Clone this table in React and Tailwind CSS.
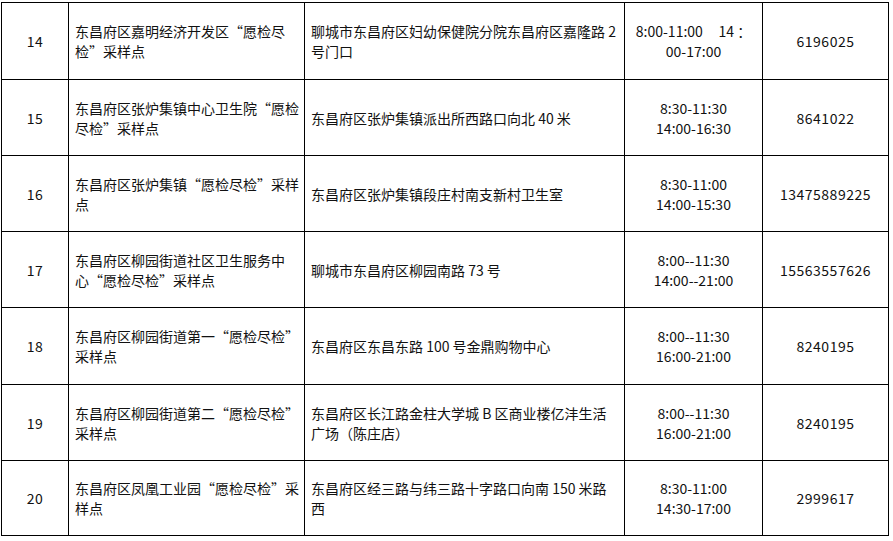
import React from "react";

const rows = [
  {
    n: "14",
    name: ["东昌府区嘉明经济开发区“愿检尽", "检”采样点"],
    addr: ["聊城市东昌府区妇幼保健院分院东昌府区嘉隆路 2", "号门口"],
    time: ["8:00-11:00     14 ：", "00-17:00"],
    tel: "6196025",
    h: "h-[77px]",
  },
  {
    n: "15",
    name: ["东昌府区张炉集镇中心卫生院“愿检", "尽检”采样点"],
    addr: ["东昌府区张炉集镇派出所西路口向北 40 米"],
    time: ["8:30-11:30", "14:00-16:30"],
    tel: "8641022",
    h: "h-[76px]",
  },
  {
    n: "16",
    name: ["东昌府区张炉集镇“愿检尽检”采样", "点"],
    addr: ["东昌府区张炉集镇段庄村南支新村卫生室"],
    time: ["8:30-11:00", "14:00-15:30"],
    tel: "13475889225",
    h: "h-[76px]",
  },
  {
    n: "17",
    name: ["东昌府区柳园街道社区卫生服务中", "心“愿检尽检”采样点"],
    addr: ["聊城市东昌府区柳园南路 73 号"],
    time: ["8:00--11:30", "14:00--21:00"],
    tel: "15563557626",
    h: "h-[76px]",
  },
  {
    n: "18",
    name: ["东昌府区柳园街道第一“愿检尽检”", "采样点"],
    addr: ["东昌府区东昌东路 100 号金鼎购物中心"],
    time: ["8:00--11:30", "16:00-21:00"],
    tel: "8240195",
    h: "h-[77px]",
  },
  {
    n: "19",
    name: ["东昌府区柳园街道第二“愿检尽检”", "采样点"],
    addr: ["东昌府区长江路金柱大学城 B 区商业楼亿沣生活", "广场（陈庄店）"],
    time: ["8:00--11:30", "16:00-21:00"],
    tel: "8240195",
    h: "h-[76px]",
  },
  {
    n: "20",
    name: ["东昌府区凤凰工业园“愿检尽检”采", "样点"],
    addr: ["东昌府区经三路与纬三路十字路口向南 150 米路", "西"],
    time: ["8:30-11:00", "14:30-17:00"],
    tel: "2999617",
    h: "h-[75px]",
  },
];

function Lines({ lines }) {
  return lines.map((l, i) => (
    <div key={i} className="whitespace-pre">
      {l}
    </div>
  ));
}

export default function App() {
  return (
    <div
      className="w-[893px] h-[541px] bg-white text-[14px] leading-[20px] text-[#111]"
      style={{ fontFamily: '"Noto Sans CJK SC", "Noto Sans", sans-serif' }}
    >
      <div className="ml-[1px] pt-[2px]">
        <div className="inline-flex flex-col border-l border-t border-black">
          {rows.map((r) => (
            <div key={r.n} className={`flex ${r.h}`}>
              <div className="w-[67px] shrink-0 border-r border-b border-black flex items-center justify-center tracking-[0.5px]">
                {r.n}
              </div>
              <div className="w-[236px] shrink-0 border-r border-b border-black flex flex-col justify-center pl-[6px]">
                <Lines lines={r.name} />
              </div>
              <div className="w-[320px] shrink-0 border-r border-b border-black flex flex-col justify-center pl-[6px]">
                <Lines lines={r.addr} />
              </div>
              <div className="w-[138px] shrink-0 border-r border-b border-black flex flex-col justify-center items-center text-center">
                <Lines lines={r.time} />
              </div>
              <div className="w-[126px] shrink-0 border-r border-b border-black flex items-center justify-center tracking-[0.5px]">
                {r.tel}
              </div>
            </div>
          ))}
        </div>
      </div>
    </div>
  );
}
